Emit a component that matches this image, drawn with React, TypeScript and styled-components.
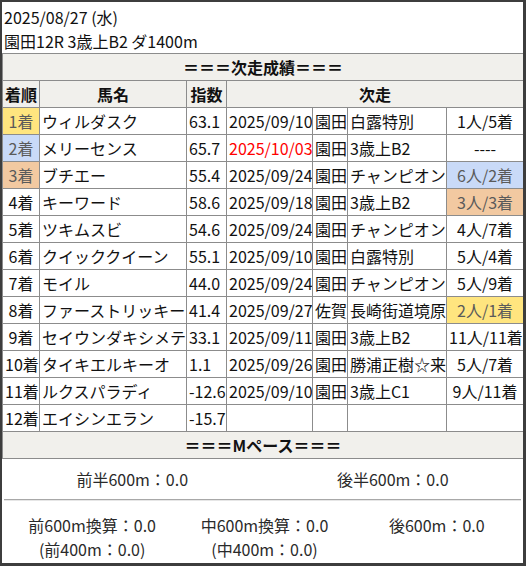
import styled, { createGlobalStyle } from "styled-components";

const GlobalStyle = createGlobalStyle`
  html, body {
    margin: 0;
    padding: 0;
    background: #3d3d3d;
  }
  body {
    font-family: "Noto Sans CJK JP", "Noto Sans", sans-serif;
    color: #111;
  }
`;

const Frame = styled.div`
  margin: 2px 0 0 2px;
  width: 521px;
  height: 561px;
  background: #fff;
  overflow: hidden;
`;

const RaceInfo = styled.div`
  padding: 3px 2px 0 2px;
  height: 48px;
  font-size: 16px;
  line-height: 24px;
`;

const Table = styled.table`
  width: 521px;
  border-collapse: collapse;
  table-layout: fixed;
  font-size: 16px;
`;

const Head = styled.th<{ $align?: string }>`
  height: 26px;
  padding: 0 2px;
  border: 1px solid #8c8c8c;
  background: #f1f0ec;
  font-weight: bold;
  text-align: ${p => p.$align || "center"};
  line-height: 26px;
  white-space: nowrap;
`;

const Cell = styled.td<{ $align?: string; $bg?: string; $red?: boolean }>`
  height: 26px;
  padding: 0 2px;
  border: 1px solid #8c8c8c;
  line-height: 26px;
  white-space: nowrap;
  overflow: hidden;
  text-align: ${p => p.$align || "left"};
  background: ${p => p.$bg || "#fff"};
  color: ${p => (p.$red ? "#ff0000" : p.$bg ? "#5a5a5a" : "#111")};
`;

const PaceTop = styled.div`
  display: grid;
  grid-template-columns: 1fr 1fr;
  height: 40px;
  align-items: center;
  font-size: 16px;
  color: #2a2a2a;
  text-align: center;
`;

const Rule = styled.div`
  margin: 0 2px;
  border-top: 1px solid #a8a8a8;
  border-bottom: 1px solid #e6e6e6;
`;

const PaceBottom = styled.div`
  display: grid;
  grid-template-columns: 1fr 1fr 1fr;
  padding: 12px 0 0 4px;
  font-size: 16px;
  line-height: 24px;
  color: #2a2a2a;
  text-align: center;
`;

const YELLOW = "#ffe57f";
const BLUE = "#c9daf8";
const ORANGE = "#f2c9a1";

type Row = {
  pos: string;
  name: string;
  idx: string;
  date?: string;
  red?: boolean;
  place?: string;
  race?: string;
  res?: string;
  resBg?: string;
  posBg?: string;
};

const rows: Row[] = [
  { pos: "1着", posBg: YELLOW, name: "ウィルダスク", idx: "63.1", date: "2025/09/10", place: "園田", race: "白露特別", res: "1人/5着" },
  { pos: "2着", posBg: BLUE, name: "メリーセンス", idx: "65.7", date: "2025/10/03", red: true, place: "園田", race: "3歳上B2", res: "----" },
  { pos: "3着", posBg: ORANGE, name: "ブチエー", idx: "55.4", date: "2025/09/24", place: "園田", race: "チャンピオン", res: "6人/2着", resBg: BLUE },
  { pos: "4着", name: "キーワード", idx: "58.6", date: "2025/09/18", place: "園田", race: "3歳上B2", res: "3人/3着", resBg: ORANGE },
  { pos: "5着", name: "ツキムスビ", idx: "54.6", date: "2025/09/24", place: "園田", race: "チャンピオン", res: "4人/7着" },
  { pos: "6着", name: "クイッククイーン", idx: "55.1", date: "2025/09/10", place: "園田", race: "白露特別", res: "5人/4着" },
  { pos: "7着", name: "モイル", idx: "44.0", date: "2025/09/24", place: "園田", race: "チャンピオン", res: "5人/9着" },
  { pos: "8着", name: "ファーストリッキー", idx: "41.4", date: "2025/09/27", place: "佐賀", race: "長崎街道境原", res: "2人/1着", resBg: YELLOW },
  { pos: "9着", name: "セイウンダキシメテ", idx: "33.1", date: "2025/09/11", place: "園田", race: "3歳上B2", res: "11人/11着" },
  { pos: "10着", name: "タイキエルキーオ", idx: "1.1", date: "2025/09/26", place: "園田", race: "勝浦正樹☆来", res: "5人/7着" },
  { pos: "11着", name: "ルクスパラディ", idx: "-12.6", date: "2025/09/10", place: "園田", race: "3歳上C1", res: "9人/11着" },
  { pos: "12着", name: "エイシンエラン", idx: "-15.7" },
];

const widths = [37, 147, 40, 86, 35, 99, 77];

export default function App() {
  return (
    <>
      <GlobalStyle />
      <Frame>
        <RaceInfo>
          <div>2025/08/27 (水)</div>
          <div>園田12R 3歳上B2 ダ1400m</div>
        </RaceInfo>
        <Table>
          <colgroup>
            {widths.map((w, i) => (
              <col key={i} style={{ width: w }} />
            ))}
          </colgroup>
          <thead>
            <tr>
              <Head colSpan={7}>＝＝＝次走成績＝＝＝</Head>
            </tr>
            <tr>
              <Head>着順</Head>
              <Head>馬名</Head>
              <Head>指数</Head>
              <Head colSpan={4}>次走</Head>
            </tr>
          </thead>
          <tbody>
            {rows.map(r => (
              <tr key={r.pos}>
                <Cell $align="center" $bg={r.posBg}>{r.pos}</Cell>
                <Cell>{r.name}</Cell>
                <Cell>{r.idx}</Cell>
                <Cell $red={r.red}>{r.date}</Cell>
                <Cell>{r.place}</Cell>
                <Cell>{r.race}</Cell>
                <Cell $align="center" $bg={r.resBg}>{r.res}</Cell>
              </tr>
            ))}
            <tr>
              <Head colSpan={7}>＝＝＝Mペース＝＝＝</Head>
            </tr>
          </tbody>
        </Table>
        <PaceTop>
          <div>前半600m：0.0</div>
          <div>後半600m：0.0</div>
        </PaceTop>
        <Rule />
        <PaceBottom>
          <div>
            前600m換算：0.0
            <br />
            (前400m：0.0)
          </div>
          <div>
            中600m換算：0.0
            <br />
            (中400m：0.0)
          </div>
          <div>後600m：0.0</div>
        </PaceBottom>
      </Frame>
    </>
  );
}
